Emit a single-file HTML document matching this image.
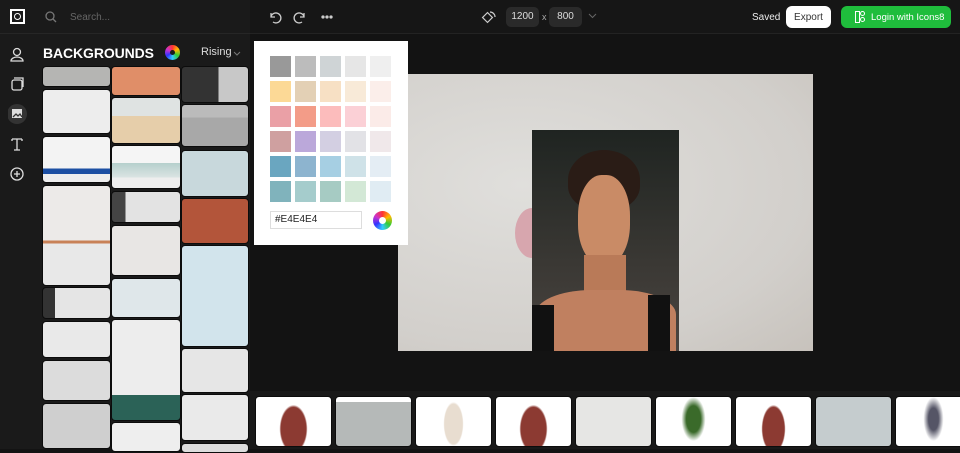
<!DOCTYPE html>
<html><head><meta charset="utf-8"><style>
*{margin:0;padding:0;box-sizing:border-box}
body{width:960px;height:449px;background:#131313;overflow:hidden;position:relative;font-family:"Liberation Sans",sans-serif;color:#fff}
.a{position:absolute}
.t{position:absolute;border-radius:4px;border:1px solid #0c0c0c}
.sw{position:absolute;width:21px;height:21px}
</style></head><body>
<div class="a" style="left:0;top:0;width:250px;height:34px;background:#1a1a1a;border-bottom:1px solid #262626"></div>
<div class="a" style="left:250px;top:0;width:710px;height:34px;background:#161616;border-bottom:1px solid #232323"></div>
<div class="a" style="left:0;top:34px;width:250px;height:415px;background:#1a1a1a"></div>
<div class="a" style="left:10px;top:9px;width:15px;height:15px;border:2px solid #fff"></div>
<div class="a" style="left:14px;top:13px;width:7px;height:7px;border:1.5px solid #fff;border-radius:50%"></div>
<svg class="a" style="left:45px;top:11px" width="12" height="12"><circle cx="5" cy="5" r="4" fill="none" stroke="#777" stroke-width="1.3"/><line x1="8" y1="8" x2="11" y2="11" stroke="#777" stroke-width="1.3"/></svg>
<div class="a" style="left:70px;top:12px;font-size:10px;color:#666">Search...</div>
<svg class="a" style="left:267px;top:9px" width="70" height="16" fill="none" stroke="#ccc" stroke-width="1.3"><path d="M4 4v4h4M4 8a5 5 0 1 1 2 5"/><path d="M37 4v4h-4M37 8a5 5 0 1 0 -2 5"/><circle cx="56" cy="8" r="1" fill="#ccc"/><circle cx="60" cy="8" r="1" fill="#ccc"/><circle cx="64" cy="8" r="1" fill="#ccc"/></svg>
<svg class="a" style="left:481px;top:9px" width="16" height="16" fill="none" stroke="#ccc" stroke-width="1.2"><rect x="3" y="5" width="7" height="7" transform="rotate(45 6.5 8.5)"/><path d="M9 3a5 5 0 0 1 5 5"/></svg>
<div class="a" style="left:506px;top:7px;width:33px;height:20px;background:#2a2a2a;border-radius:5px;font-size:10px;text-align:center;line-height:20px;color:#ddd">1200</div>
<div class="a" style="left:542px;top:12px;font-size:9px;color:#aaa">x</div>
<div class="a" style="left:549px;top:7px;width:33px;height:20px;background:#2a2a2a;border-radius:5px;font-size:10px;text-align:center;line-height:20px;color:#ddd">800</div>
<svg class="a" style="left:588px;top:13px" width="9" height="6"><path d="M1 1l3.5 3.5L8 1" fill="none" stroke="#666"/></svg>
<div class="a" style="left:752px;top:12px;font-size:10px;color:#eee">Saved</div>
<div class="a" style="left:786px;top:6px;width:45px;height:22px;background:#fff;border-radius:6px;color:#333;font-size:10px;text-align:center;line-height:23px">Export</div>
<div class="a" style="left:841px;top:6px;width:110px;height:22px;background:#1fbd3c;border-radius:6px;font-size:9.5px;line-height:23px;padding-left:30px;color:#fff">Login with Icons8</div>
<div class="a" style="left:855px;top:11px;width:5px;height:12px;border:1.3px solid #fff"></div>
<div class="a" style="left:860px;top:11px;width:5px;height:5px;border:1.3px solid #fff;border-radius:50%"></div>
<div class="a" style="left:860px;top:17px;width:5px;height:5px;border:1.3px solid #fff;border-radius:50%"></div>
<svg class="a" style="left:8px;top:44px" width="20" height="140" fill="none" stroke="#ddd" stroke-width="1.3"><circle cx="9" cy="8" r="3.5"/><path d="M3 17a6 4 0 0 1 12 0z"/><rect x="4" y="36" width="10" height="10" rx="2"/><path d="M6 34h9v9"/><circle cx="9" cy="70" r="10" fill="#333" stroke="none"/><rect x="4" y="65" width="10" height="9" fill="#ddd" stroke="none"/><path d="M5 73l3-3 2 2 2-2 2 3" stroke="#333"/><path d="M4 95h10M9 95v11M6 106h6M4 95v2M14 95v2"/><circle cx="9" cy="130" r="6"/><path d="M9 127v6M6 130h6"/></svg>
<div class="a" style="left:43px;top:45px;font-size:14px;font-weight:bold;letter-spacing:-0.1px">BACKGROUNDS</div>
<div class="a" style="left:165px;top:45px;width:15px;height:15px;border-radius:50%;background:conic-gradient(#f33,#fb0,#3c3,#3cf,#33f,#c3c,#f33)"></div>
<div class="a" style="left:170px;top:50px;width:5px;height:5px;border-radius:50%;background:#1a1a1a"></div>
<div class="a" style="left:201px;top:46px;font-size:11px;color:#ddd">Rising</div>
<svg class="a" style="left:233px;top:51px" width="8" height="5"><path d="M1 1l3 3 3-3" fill="none" stroke="#777"/></svg>
<div class="t" style="left:42px;top:66px;width:69px;height:21px;background:#b5b5b3"></div>
<div class="t" style="left:42px;top:89px;width:69px;height:45px;background:#ededed"></div>
<div class="t" style="left:42px;top:136px;width:69px;height:47px;background:linear-gradient(#f3f3f3 70%,#1c4fa3 70%,#1c4fa3 82%,#eee 82%)"></div>
<div class="t" style="left:42px;top:185px;width:69px;height:101px;background:linear-gradient(#eceae8 55%,#c88157 55%,#c88157 58%,#e8e8e8 58%)"></div>
<div class="t" style="left:42px;top:287px;width:69px;height:32px;background:linear-gradient(90deg,#333 18%,#e5e5e5 18%)"></div>
<div class="t" style="left:42px;top:321px;width:69px;height:37px;background:#e9e9e9"></div>
<div class="t" style="left:42px;top:360px;width:69px;height:41px;background:#dcdcdc"></div>
<div class="t" style="left:42px;top:403px;width:69px;height:46px;background:#cfcfcf"></div>
<div class="t" style="left:111px;top:66px;width:70px;height:30px;background:#e08e68"></div>
<div class="t" style="left:111px;top:97px;width:70px;height:47px;background:linear-gradient(#dfe3e2 40%,#e6ceaa 40%)"></div>
<div class="t" style="left:111px;top:145px;width:70px;height:44px;background:linear-gradient(#f5f5f5 40%,#b5cfcc 40%,#dbe4e3 75%,#eee 75%)"></div>
<div class="t" style="left:111px;top:191px;width:70px;height:32px;background:linear-gradient(90deg,#444 20%,#e3e3e3 20%)"></div>
<div class="t" style="left:111px;top:225px;width:70px;height:51px;background:#e8e6e4"></div>
<div class="t" style="left:111px;top:278px;width:70px;height:40px;background:#dfe7ea"></div>
<div class="t" style="left:111px;top:319px;width:70px;height:102px;background:linear-gradient(#ededed 75%,#2b6257 75%)"></div>
<div class="t" style="left:111px;top:422px;width:70px;height:30px;background:#eee"></div>
<div class="t" style="left:181px;top:66px;width:68px;height:37px;background:linear-gradient(90deg,#333 55%,#c8c8c8 55%)"></div>
<div class="t" style="left:181px;top:104px;width:68px;height:43px;background:linear-gradient(#bbb 30%,#a8a8a8 30%)"></div>
<div class="t" style="left:181px;top:150px;width:68px;height:47px;background:#c8d8dc"></div>
<div class="t" style="left:181px;top:198px;width:68px;height:46px;background:#b3553a"></div>
<div class="t" style="left:181px;top:245px;width:68px;height:102px;background:#d2e4ec"></div>
<div class="t" style="left:181px;top:348px;width:68px;height:45px;background:#e6e6e6"></div>
<div class="t" style="left:181px;top:394px;width:68px;height:47px;background:#eaeaea"></div>
<div class="t" style="left:181px;top:443px;width:68px;height:10px;background:#ddd"></div>
<div class="a" style="left:398px;top:74px;width:415px;height:277px;background:radial-gradient(ellipse at 30% 40%,#e0dfdc,#d2cfcb 70%,#c7c2bc)"></div>
<div class="a" style="left:515px;top:208px;width:34px;height:50px;border-radius:50%;background:#d7a6ae"></div>
<div class="a" style="left:532px;top:130px;width:147px;height:221px;background:linear-gradient(#1f2421,#3a3834 60%,#4a4440)"></div>
<div class="a" style="left:568px;top:150px;width:72px;height:60px;border-radius:50% 50% 40% 40%;background:#2a1c16"></div>
<div class="a" style="left:578px;top:175px;width:52px;height:90px;border-radius:45%;background:#c98b66"></div>
<div class="a" style="left:584px;top:255px;width:42px;height:40px;background:#b97a58"></div>
<div class="a" style="left:535px;top:290px;width:141px;height:61px;border-radius:40% 40% 0 0;background:#c08060"></div>
<div class="a" style="left:532px;top:305px;width:22px;height:46px;background:#111"></div>
<div class="a" style="left:648px;top:295px;width:22px;height:56px;background:#111"></div>
<div class="a" style="left:254px;top:41px;width:154px;height:204px;background:#fff"></div>
<div class="sw" style="left:270px;top:56px;background:#999"></div><div class="sw" style="left:295px;top:56px;background:#bcbcbc"></div><div class="sw" style="left:320px;top:56px;background:#cfd4d6"></div><div class="sw" style="left:345px;top:56px;background:#e6e6e6"></div><div class="sw" style="left:370px;top:56px;background:#efefef"></div>
<div class="sw" style="left:270px;top:81px;background:#fcd996"></div><div class="sw" style="left:295px;top:81px;background:#e3d0b5"></div><div class="sw" style="left:320px;top:81px;background:#f7e0c4"></div><div class="sw" style="left:345px;top:81px;background:#f8ead8"></div><div class="sw" style="left:370px;top:81px;background:#fbeeea"></div>
<div class="sw" style="left:270px;top:106px;background:#eaa0a6"></div><div class="sw" style="left:295px;top:106px;background:#f39c88"></div><div class="sw" style="left:320px;top:106px;background:#fcbcbc"></div><div class="sw" style="left:345px;top:106px;background:#fbd0d6"></div><div class="sw" style="left:370px;top:106px;background:#fbebe8"></div>
<div class="sw" style="left:270px;top:131px;background:#cfa0a0"></div><div class="sw" style="left:295px;top:131px;background:#bba8da"></div><div class="sw" style="left:320px;top:131px;background:#d3cfe2"></div><div class="sw" style="left:345px;top:131px;background:#e2e2e6"></div><div class="sw" style="left:370px;top:131px;background:#f0e8ea"></div>
<div class="sw" style="left:270px;top:156px;background:#6aa6c0"></div><div class="sw" style="left:295px;top:156px;background:#8db4cf"></div><div class="sw" style="left:320px;top:156px;background:#a6cfe3"></div><div class="sw" style="left:345px;top:156px;background:#cfe2e8"></div><div class="sw" style="left:370px;top:156px;background:#e4edf4"></div>
<div class="sw" style="left:270px;top:181px;background:#80b3bc"></div><div class="sw" style="left:295px;top:181px;background:#a5cccc"></div><div class="sw" style="left:320px;top:181px;background:#a6cbc3"></div><div class="sw" style="left:345px;top:181px;background:#d3e8d6"></div><div class="sw" style="left:370px;top:181px;background:#e0ecf3"></div>
<div class="a" style="left:270px;top:211px;width:92px;height:18px;border:1px solid #ddd;font-size:10px;color:#222;line-height:16px;padding-left:4px">#E4E4E4</div>
<div class="a" style="left:373px;top:211px;width:19px;height:19px;border-radius:50%;background:conic-gradient(#f33,#fb0,#3c3,#3cf,#33f,#c3c,#f33)"></div>
<div class="a" style="left:379px;top:217px;width:7px;height:7px;border-radius:50%;background:#fff"></div>
<div class="a" style="left:250px;top:391px;width:710px;height:58px;background:#191919"></div>
<div class="t" style="left:255px;top:396px;width:77px;height:51px;background:radial-gradient(ellipse 14px 24px at 50% 65%,#8c3a32 90%,#fff 100%)"></div>
<div class="t" style="left:335px;top:396px;width:77px;height:51px;background:linear-gradient(#fff 10%,#b5b9b8 10%)"></div>
<div class="t" style="left:415px;top:396px;width:77px;height:51px;background:radial-gradient(ellipse 10px 22px at 50% 55%,#e8ddd0 90%,#fff 100%)"></div>
<div class="t" style="left:495px;top:396px;width:77px;height:51px;background:radial-gradient(ellipse 14px 24px at 50% 65%,#8c3a32 90%,#fff 100%)"></div>
<div class="t" style="left:575px;top:396px;width:77px;height:51px;background:#e6e6e4"></div>
<div class="t" style="left:655px;top:396px;width:77px;height:51px;background:radial-gradient(ellipse 12px 22px at 50% 45%,#3a6a2a 60%,#fff 100%)"></div>
<div class="t" style="left:735px;top:396px;width:77px;height:51px;background:radial-gradient(ellipse 12px 24px at 50% 65%,#8c3a32 90%,#fff 100%)"></div>
<div class="t" style="left:815px;top:396px;width:77px;height:51px;background:#c5ccce"></div>
<div class="t" style="left:895px;top:396px;width:77px;height:51px;background:radial-gradient(ellipse 10px 22px at 50% 45%,#556 50%,#fff 100%)"></div>
</body></html>
